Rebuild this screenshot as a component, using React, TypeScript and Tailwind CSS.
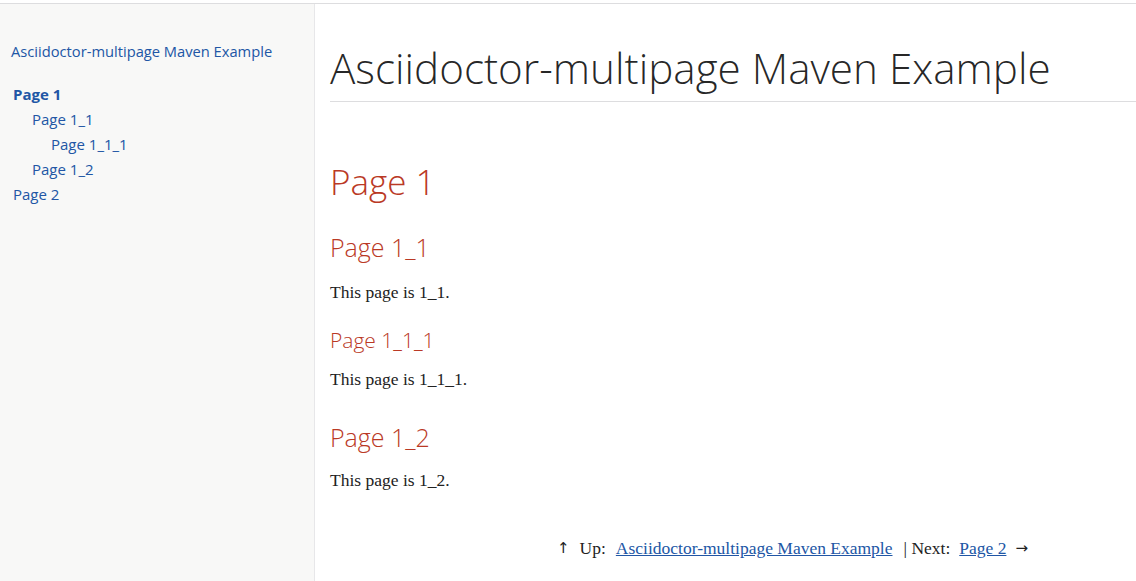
const sans = "font-['Open_Sans','DejaVu_Sans',sans-serif]";
const serif = "font-['Liberation_Serif','DejaVu_Serif',serif]";

const toc = [
  { label: "Page 1", level: 0, current: true },
  { label: "Page 1_1", level: 1 },
  { label: "Page 1_1_1", level: 2 },
  { label: "Page 1_2", level: 1 },
  { label: "Page 2", level: 0 },
];

const indent = ["pl-[13px]", "pl-[32px]", "pl-[51px]"];

export default function App() {
  return (
    <div className="h-[581px] w-[1136px] overflow-hidden bg-white pt-[3px]">
      <div className="flex h-full border-t border-[#dddddf]">
        {/* sidebar */}
        <aside className={`w-[315px] shrink-0 border-r border-[#e7e7e9] bg-[#f8f8f7] ${sans}`}>
          <div className="pl-[11px] pt-[37px] text-[14.7px] leading-[20px] text-[#2156a5]">
            Asciidoctor-multipage Maven Example
          </div>
          <ul className="mt-[21px] text-[15px] leading-[25px] text-[#2156a5]">
            {toc.map((t) => (
              <li key={t.label} className={`${indent[t.level]} ${t.current ? "font-bold" : ""}`}>
                {t.label}
              </li>
            ))}
          </ul>
        </aside>

        {/* main */}
        <main className="flex-1 pl-[15px]">
          <h1
            className={`mt-[37px] border-b border-[#dddddf] pb-[6px] text-[42.2px] font-light leading-[54px] text-black/85 ${sans}`}
          >
            Asciidoctor-multipage Maven Example
          </h1>

          <h2 className={`mt-[57px] text-[35px] font-light leading-[46px] text-[#ba3925] ${sans}`}>Page 1</h2>

          <h3 className={`mt-[25px] text-[25px] font-light leading-[34px] text-[#ba3925] ${sans}`}>Page 1_1</h3>
          <p className={`mt-[16px] text-[17.5px] leading-[24px] text-[#222] ${serif}`}>This page is 1_1.</p>

          <h4 className={`mt-[21px] text-[21px] font-light leading-[30px] text-[#ba3925] ${sans}`}>Page 1_1_1</h4>
          <p className={`mt-[12px] text-[17.5px] leading-[24px] text-[#222] ${serif}`}>This page is 1_1_1.</p>

          <h3 className={`mt-[29px] text-[25px] font-light leading-[34px] text-[#ba3925] ${sans}`}>Page 1_2</h3>
          <p className={`mt-[14px] text-[17.5px] leading-[24px] text-[#222] ${serif}`}>This page is 1_2.</p>

          <nav className={`mt-[44px] flex justify-end pr-[108px] text-[17.5px] leading-[24px] text-[#222] ${serif}`}>
            <span className="font-['DejaVu_Sans',sans-serif] text-[15px]">↑</span>
            <span className="ml-[10px]">Up:</span>
            <a className="ml-[10px] text-[#2156a5] underline">Asciidoctor-multipage Maven Example</a>
            <span className="ml-[11px]">| Next:</span>
            <a className="ml-[9px] text-[#2156a5] underline">Page 2</a>
            <span className="ml-[9px] font-['DejaVu_Sans',sans-serif] text-[15px] text-[#222]">→</span>
          </nav>
        </main>
      </div>
    </div>
  );
}
